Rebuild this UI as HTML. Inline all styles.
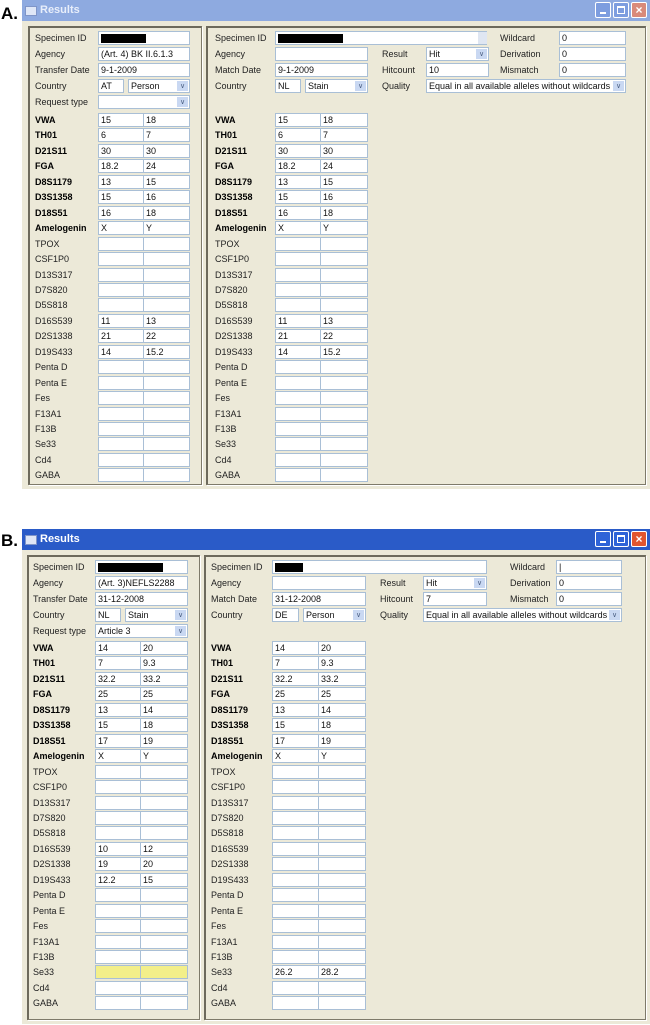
<!DOCTYPE html>
<html><head><meta charset="utf-8"><style>
html,body{margin:0;padding:0;background:#fff;width:650px;height:1025px;overflow:hidden;position:relative;font-family:"Liberation Sans",Tahoma,sans-serif;}
.a{position:absolute;}
.lbl{position:absolute;font-size:9px;color:#222;line-height:12px;white-space:nowrap;}
.b{font-weight:bold;color:#000;}
.f{position:absolute;background:#fff;border:1px solid #a9bfd6;box-sizing:border-box;font-size:9px;line-height:12px;padding-left:2px;color:#111;white-space:nowrap;overflow:hidden;}
.dd{position:absolute;right:1px;top:1px;width:11px;bottom:1px;background:#c9d8f2;color:#4d6185;font-size:7px;text-align:center;line-height:11px;}
.pan{position:absolute;border:1px solid #7e7a6a;border-left:2px solid #6d6a5c;border-top:2px solid #6d6a5c;box-sizing:border-box;box-shadow:1px 1px 0 #fff;}
.big{position:absolute;font-weight:bold;font-size:17px;font-family:"Liberation Sans Narrow","Liberation Sans",sans-serif;}
.btn{position:absolute;width:16px;height:16px;border:1px solid #fff;border-radius:2px;box-sizing:border-box;}
</style></head><body>
<div class="big" style="left:1px;top:4px">A.</div>
<div class="big" style="left:1px;top:531px">B.</div>
<script>
function E(h){document.write(h);}
function win(o){
 var T=o.top;
 E('<div class="a" style="left:22px;top:'+T+'px;width:628px;height:'+(o.h)+'px;background:#ece9d8"></div>');
 E('<div class="a" style="left:22px;top:'+T+'px;width:628px;height:21px;background:'+o.tc+'"></div>');
 E('<div class="a" style="left:25px;top:'+(T+6)+'px;width:10px;height:8px;background:#dfe7f7;border:1px solid #7f95c8"></div>');
 E('<div class="lbl" style="left:40px;top:'+(T+4)+'px;font-size:11px;font-weight:bold;color:'+o.tt+'">Results</div>');
 var bc=o.bc;
 E('<div class="btn" style="left:595px;top:'+(T+2)+'px;background:'+bc+'"><div class="a" style="left:4px;top:9px;width:6px;height:2px;background:#fff"></div></div>');
 E('<div class="btn" style="left:613px;top:'+(T+2)+'px;background:'+bc+'"><div class="a" style="left:3px;top:3px;width:8px;height:8px;border:1px solid #fff;border-top-width:2px;box-sizing:border-box"></div></div>');
 E('<div class="btn" style="left:631px;top:'+(T+2)+'px;background:'+o.xc+';color:#fff;font-size:12px;font-weight:bold;text-align:center;line-height:14px">×</div>');
 E('<div class="pan" style="left:'+o.L.x+'px;top:'+(T+26)+'px;width:'+o.L.w+'px;height:'+(o.h-30)+'px"></div>');
 E('<div class="pan" style="left:'+o.R.x+'px;top:'+(T+26)+'px;width:'+o.R.w+'px;height:'+(o.h-30)+'px"></div>');
}
function f(x,y,w,t,dd,bg){E('<div class="f" style="left:'+x+'px;top:'+y+'px;width:'+w+'px;height:14px;'+(bg?'background:'+bg:'')+'">'+(t||'')+(dd?'<div class="dd">&#8744;</div>':'')+'</div>');}
function l(x,y,t,b){E('<div class="lbl'+(b?' b':'')+'" style="left:'+x+'px;top:'+(y+1)+'px">'+t+'</div>');}
var loci=['VWA','TH01','D21S11','FGA','D8S1179','D3S1358','D18S51','Amelogenin','TPOX','CSF1P0','D13S317','D7S820','D5S818','D16S539','D2S1338','D19S433','Penta D','Penta E','Fes','F13A1','F13B','Se33','Cd4','GABA'];
function side(lx,fx,fw,aw,y0,hdr,pitch,ay0,alle,extra){
 var ys=[y0,y0+16,y0+32,y0+48,y0+64];
 var n=hdr.length;
 for(var i=0;i<n;i++){var h=hdr[i];l(lx,ys[i],h[0]);
  if(h[1]==='cty'){f(fx,ys[i],aw-20,h[2]);f(fx+aw-16,ys[i],fw-aw+16,h[3],1);}
  else if(h[1]!==null)f(fx,ys[i],h[3]||fw,h[2],h[4]);}
 for(var j=0;j<loci.length;j++){var y=Math.round(ay0+j*pitch);l(lx,y,loci[j],j<8);
  var a=alle[j]||['',''];var bg=(extra&&extra[j])||'';
  f(fx,y,aw,a[0],0,bg);f(fx+aw-1,y,fw-aw+1,a[1],0,bg);}
}
var blk='<span style="display:inline-block;background:#000;height:9px;vertical-align:middle;width:';
win({top:0,h:489,tc:'#8eaae0',tt:'#e8eefa',bc:'#7d9ddf',xc:'#d98a7a',L:{x:28,w:174},R:{x:206,w:440}});
var aA=[['15','18'],['6','7'],['30','30'],['18.2','24'],['13','15'],['15','16'],['16','18'],['X','Y'],,,,,,['11','13'],['21','22'],['14','15.2']];
side(35,98,92,46,31,[['Specimen ID','',blk+'45px"></span>'],['Agency','','(Art. 4) BK II.6.1.3'],['Transfer Date','','9-1-2009'],['Country','cty','AT','Person'],['Request type','','',92,1]],15.45,113,aA);
side(215,275,93,46,31,[['Specimen ID','',blk+'65px"></span>',212],['Agency','',''],['Match Date','','9-1-2009'],['Country','cty','NL','Stain']],15.45,113,aA);
l(382,47,'Result');f(426,47,63,'Hit',1);l(382,63,'Hitcount');f(426,63,63,'10');l(382,79,'Quality');f(426,79,200,'Equal in all available alleles without wildcards',1);
l(500,31,'Wildcard');f(559,31,67,'0');l(500,47,'Derivation');f(559,47,67,'0');l(500,63,'Mismatch');f(559,63,67,'0');
E('<div class="a" style="left:478px;top:32px;width:9px;height:12px;background:#dfe6f2"></div>');
win({top:529,h:495,tc:'#2a5bc8',tt:'#fff',bc:'#2e63d8',xc:'#e0552f',L:{x:27,w:173},R:{x:204,w:442}});
var aB=[['14','20'],['7','9.3'],['32.2','33.2'],['25','25'],['13','14'],['15','18'],['17','19'],['X','Y'],,,,,,['10','12'],['19','20'],['12.2','15']];
var aB2=[['14','20'],['7','9.3'],['32.2','33.2'],['25','25'],['13','14'],['15','18'],['17','19'],['X','Y']];aB2[21]=['26.2','28.2'];
var yel=[];yel[21]='#f3ef8a';
side(33,95,93,46,560,[['Specimen ID','',blk+'65px"></span>'],['Agency','','(Art. 3)NEFLS2288'],['Transfer Date','','31-12-2008'],['Country','cty','NL','Stain'],['Request type','','Article 3',93,1]],15.45,641,aB,yel);
side(211,272,94,47,560,[['Specimen ID','',blk+'28px"></span>',215],['Agency','',''],['Match Date','','31-12-2008'],['Country','cty','DE','Person']],15.45,641,aB2);
l(380,576,'Result');f(423,576,64,'Hit',1);l(380,592,'Hitcount');f(423,592,64,'7');l(380,608,'Quality');f(423,608,199,'Equal in all available alleles without wildcards',1);
l(510,560,'Wildcard');f(556,560,66,'|');l(510,576,'Derivation');f(556,576,66,'0');l(510,592,'Mismatch');f(556,592,66,'0');
</script>
</body></html>
